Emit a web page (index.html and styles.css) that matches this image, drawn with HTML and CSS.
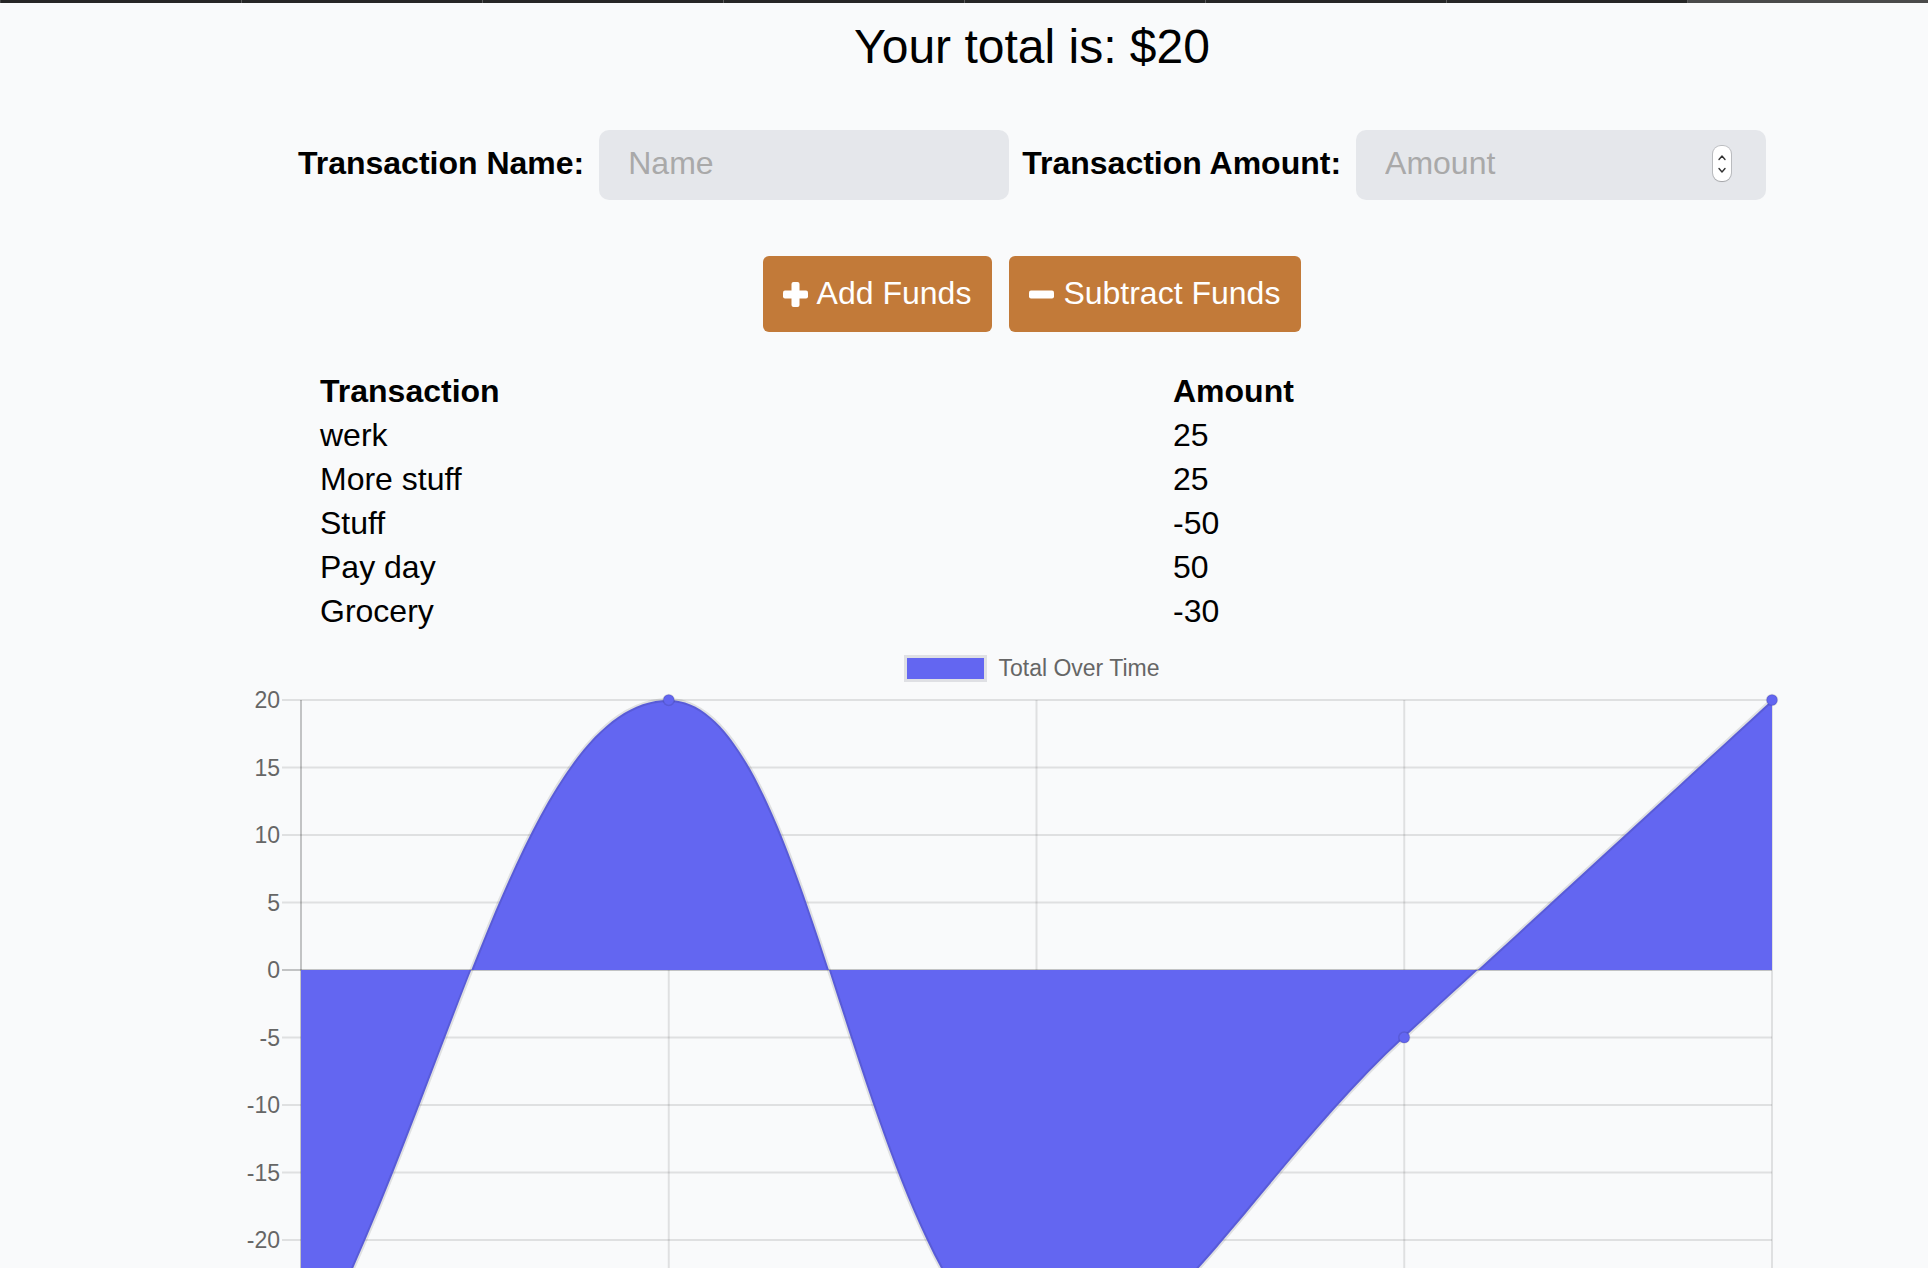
FILE: index.html
```html
<!DOCTYPE html>
<html lang="en">
<head>
<meta charset="utf-8">
<title>Budget Tracker</title>
<link rel="stylesheet" href="styles.css">
</head>
<body>
<div class="topbar">
  <span class="tab"></span><span class="tab"></span><span class="tab"></span><span class="tab"></span>
  <span class="tab"></span><span class="tab"></span><span class="tab"></span><span class="tab tab-active"></span>
</div>
<main class="page">
  <h1 class="total">Your total is: $<span id="total">20</span></h1>

  <div class="form-row">
    <label class="label" for="t-name">Transaction Name:</label>
    <div class="field field-name">
      <input id="t-name" class="input" type="text" placeholder="Name">
    </div>
    <label class="label" for="t-amount">Transaction Amount:</label>
    <div class="field field-amount">
      <input id="t-amount" class="input" type="text" placeholder="Amount">
      <span class="spin">
        <svg width="10" height="28" viewBox="0 0 10 28"><path d="M2 9.5 L5 6 L8 9.5" fill="none" stroke="#333" stroke-width="1.4" stroke-linecap="round" stroke-linejoin="round"/><path d="M2 18.5 L5 22 L8 18.5" fill="none" stroke="#333" stroke-width="1.4" stroke-linecap="round" stroke-linejoin="round"/></svg>
      </span>
    </div>
  </div>

  <div class="actions">
    <button class="btn" type="button">
      <svg class="icon" width="25" height="25" viewBox="0 0 25 25"><rect x="8.5" y="0" width="8" height="25" rx="2" fill="#fff"/><rect x="0" y="8.5" width="25" height="8" rx="2" fill="#fff"/></svg>
      <span>Add Funds</span>
    </button>
    <button class="btn" type="button">
      <svg class="icon" width="25" height="25" viewBox="0 0 25 25"><rect x="0" y="8.5" width="25" height="8" rx="2" fill="#fff"/></svg>
      <span>Subtract Funds</span>
    </button>
  </div>

  <div class="table">
    <div class="th">Transaction</div><div class="th">Amount</div>
    <div class="td">werk</div><div class="td">25</div>
    <div class="td">More stuff</div><div class="td">25</div>
    <div class="td">Stuff</div><div class="td">-50</div>
    <div class="td">Pay day</div><div class="td">50</div>
    <div class="td">Grocery</div><div class="td">-30</div>
  </div>

  <div class="legend">
    <span class="legend-box"></span>
    <span class="legend-label">Total Over Time</span>
  </div>

  <svg class="chart" width="1600" height="586" viewBox="232 682 1600 586">
    <g class="grid">
      <line x1="282" x2="1772" y1="700" y2="700"/>
      <line x1="282" x2="1772" y1="767.5" y2="767.5"/>
      <line x1="282" x2="1772" y1="835" y2="835"/>
      <line x1="282" x2="1772" y1="902.5" y2="902.5"/>
      <line x1="282" x2="1772" y1="1037.5" y2="1037.5"/>
      <line x1="282" x2="1772" y1="1105" y2="1105"/>
      <line x1="282" x2="1772" y1="1172.5" y2="1172.5"/>
      <line x1="282" x2="1772" y1="1240" y2="1240"/>
      <line x1="282" x2="1772" y1="1307.5" y2="1307.5"/>
      <line x1="282" x2="1772" y1="1375" y2="1375"/>
      <line x1="668.75" x2="668.75" y1="700" y2="1394"/>
      <line x1="1036.5" x2="1036.5" y1="700" y2="1394"/>
      <line x1="1404.25" x2="1404.25" y1="700" y2="1394"/>
      <line x1="1772" x2="1772" y1="700" y2="1394"/>
    </g>
    <g class="zero">
      <line x1="282" x2="1772" y1="970" y2="970"/>
      <line x1="301" x2="301" y1="700" y2="1394"/>
    </g>
    <path class="area" d="M301,970 L301,1375 C448.1,1105 521.65,700 668.75,700 C815.85,700 858.1,1293.2 1036.5,1375 C1152.3,1375 1257.15,1172.5 1404.25,1037.5 C1551.35,902.5 1624.9,835 1772,700 L1772,970 Z"/>
    <path class="line" d="M301,1375 C448.1,1105 521.65,700 668.75,700 C815.85,700 858.1,1293.2 1036.5,1375 C1152.3,1375 1257.15,1172.5 1404.25,1037.5 C1551.35,902.5 1624.9,835 1772,700"/>
    <g class="points">
      <circle cx="668.75" cy="700" r="5.5"/>
      <circle cx="1404.25" cy="1037.5" r="5.5"/>
      <circle cx="1772" cy="700" r="5.5"/>
    </g>
    <g class="ticks">
      <text x="280" y="708.2">20</text>
      <text x="280" y="775.7">15</text>
      <text x="280" y="843.2">10</text>
      <text x="280" y="910.7">5</text>
      <text x="280" y="978.2">0</text>
      <text x="280" y="1045.7">-5</text>
      <text x="280" y="1113.2">-10</text>
      <text x="280" y="1180.7">-15</text>
      <text x="280" y="1248.2">-20</text>
    </g>
  </svg>
</main>
</body>
</html>
```

FILE: styles.css
```css
* {
  box-sizing: border-box;
}

html, body {
  margin: 0;
  padding: 0;
  background: #f9fafb;
}

body {
  font-family: "Liberation Sans", Arial, Helvetica, sans-serif;
  color: #000;
}

.topbar {
  display: grid;
  grid-template-columns: repeat(8, 1fr);
  height: 3px;
  background: #262626;
}

.tab {
  border-left: 1px solid #5a5a5a;
}

.tab:first-child {
  border-left-color: #444;
}

.tab-active {
  background: #4a4a4a;
}

.page {
  margin-left: 136px;
}

.total {
  margin: 20px 0 0;
  font-size: 48px;
  line-height: 48px;
  font-weight: 400;
  text-align: center;
}

.form-row {
  display: flex;
  justify-content: center;
  align-items: center;
  margin-top: 59px;
  height: 70px;
}

.label {
  font-size: 32px;
  line-height: 32px;
  font-weight: 700;
  padding-bottom: 5px;
  margin-right: 15px;
  white-space: nowrap;
}

.field {
  display: flex;
  align-items: center;
  width: 410px;
  height: 70px;
  background: #e5e7eb;
  border-radius: 10px;
  padding: 0 35px 0 29px;
}

.field-name {
  margin-right: 13px;
}

.input {
  flex: 1;
  min-width: 0;
  border: 0;
  outline: none;
  background: transparent;
  font-family: "Liberation Sans", Arial, Helvetica, sans-serif;
  font-size: 32px;
  color: #000;
  padding: 0 0 3px;
}

.input::placeholder {
  color: #a9a9a9;
}

.spin {
  display: flex;
  align-items: center;
  justify-content: center;
  width: 18px;
  height: 35px;
  background: #fff;
  border-radius: 8px;
  box-shadow: 0 0 0 1px rgba(0, 0, 0, 0.18), 0 1px 1px rgba(0, 0, 0, 0.12);
  margin-top: -3px;
}

.actions {
  display: flex;
  justify-content: center;
  gap: 17px;
  margin-top: 56px;
}

.btn {
  display: inline-flex;
  align-items: center;
  gap: 9px;
  height: 76px;
  padding: 0 21px 0 20px;
  border: 0;
  border-radius: 6px;
  background: #c27a39;
  color: #fff;
  font-family: "Liberation Sans", Arial, Helvetica, sans-serif;
  font-size: 32px;
  line-height: 1;
}

.btn span {
  padding-bottom: 2px;
}

.icon {
  flex: none;
}

.table {
  display: grid;
  grid-template-columns: 853px 1fr;
  width: 1424px;
  margin: 37px auto 0;
  font-size: 32px;
  line-height: 44px;
}

.th {
  font-weight: 700;
}

.td {
  font-weight: 400;
}

.legend {
  display: flex;
  justify-content: center;
  align-items: center;
  gap: 11px;
  margin-top: 21px;
  height: 28px;
}

.legend-box {
  width: 83px;
  height: 27px;
  background: #6366f1;
  border: 3px solid #dfe0e4;
}

.legend-label {
  font-size: 23px;
  line-height: 28px;
  color: #666;
}

.chart {
  display: block;
  margin: 0 auto;
}

.grid line {
  stroke: rgba(0, 0, 0, 0.1);
  stroke-width: 2;
}

.zero line {
  stroke: rgba(0, 0, 0, 0.22);
  stroke-width: 2;
}

.area {
  fill: #6366f1;
}

.line {
  fill: none;
  stroke: rgba(0, 0, 0, 0.1);
  stroke-width: 4;
}

.points circle {
  fill: #6366f1;
  stroke: rgba(0, 0, 0, 0.1);
  stroke-width: 1.5;
}

.ticks text {
  font-family: "Liberation Sans", Arial, Helvetica, sans-serif;
  font-size: 23px;
  fill: #666;
  text-anchor: end;
}
```
